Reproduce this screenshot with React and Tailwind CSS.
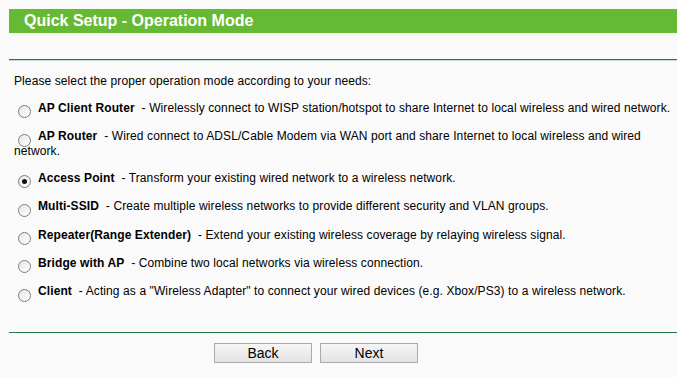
import React, { useState } from "react";

const modes = [
    {
        id: "apclient",
        label: "AP Client Router",
        desc: "Wirelessly connect to WISP station/hotspot to share Internet to local wireless and wired network.",
        gap: "mt-[12px]",
    },
    {
        id: "aprouter",
        label: "AP Router",
        desc: "Wired connect to ADSL/Cable Modem via WAN port and share Internet to local wireless and wired network.",
        gap: "mt-[13.4px]",
    },
    {
        id: "ap",
        label: "Access Point",
        desc: "Transform your existing wired network to a wireless network.",
        gap: "mt-[11.4px]",
    },
    {
        id: "mssid",
        label: "Multi-SSID",
        desc: "Create multiple wireless networks to provide different security and VLAN groups.",
        gap: "mt-[13.4px]",
    },
    {
        id: "repeater",
        label: "Repeater(Range Extender)",
        desc: "Extend your existing wireless coverage by relaying wireless signal.",
        gap: "mt-[13.4px]",
    },
    {
        id: "bridge",
        label: "Bridge with AP",
        desc: "Combine two local networks via wireless connection.",
        gap: "mt-[13.4px]",
    },
    {
        id: "client",
        label: "Client",
        desc: 'Acting as a "Wireless Adapter" to connect your wired devices (e.g. Xbox/PS3) to a wireless network.',
        gap: "mt-[13.4px]",
    },
];

const Radio = ({ checked, onClick }) => (
    <span
        onClick={onClick}
        className="relative top-[3px] inline-flex items-center justify-center align-middle w-[13px] h-[13px] ml-[4px] mr-[7px] rounded-full border border-[#7c7c7c] bg-gradient-to-br from-[#e6e6e6] to-white cursor-pointer"
    >
        {checked && <span className="w-[5px] h-[5px] rounded-full bg-[#111]" />}
    </span>
);

const App = () => {
    const [mode, setMode] = useState("ap");

    return (
        <div className="w-full h-[377px] overflow-hidden bg-[#fafafa] pt-[9px] pl-[9px] font-['Liberation_Sans',Arial,sans-serif] text-black">
            {/* Title bar */}
            <div className="h-[24px] bg-[#66b933] pl-[15px] text-[16px] leading-[24px] font-bold text-white">
                Quick Setup - Operation Mode
            </div>

            {/* Top separator */}
            <div className="mt-[26px] h-[1px] bg-[#2a7444]" />
            <div className="h-[1px] bg-[#c3dfc9]" />

            {/* Options */}
            <div className="pl-[5px] pr-[6px] text-[12px] leading-[15px] tracking-[0.1px]">
                <p className="mt-[13px]">Please select the proper operation mode according to your needs:</p>

                {modes.map((m) => (
                    <div key={m.id} className={m.gap}>
                        <Radio checked={mode === m.id} onClick={() => setMode(m.id)} />
                        <span className="font-bold">{m.label}</span>
                        {"\u00a0 - "}
                        {m.desc}
                    </div>
                ))}
            </div>

            {/* Bottom separator */}
            <div className="mt-[33px] h-[1px] bg-[#1f7a3c]" />

            {/* Buttons */}
            <div className="flex gap-[8px] pl-[205px] mt-[10px]">
                <button className="w-[98px] h-[20px] border border-[#a9a9a9] bg-gradient-to-b from-[#f6f6f6] to-[#e3e3e3] text-[14px] leading-[18px] text-black">
                    Back
                </button>
                <button className="w-[98px] h-[20px] border border-[#a9a9a9] bg-gradient-to-b from-[#f6f6f6] to-[#e3e3e3] text-[14px] leading-[18px] text-black">
                    Next
                </button>
            </div>
        </div>
    );
};

export default App;
